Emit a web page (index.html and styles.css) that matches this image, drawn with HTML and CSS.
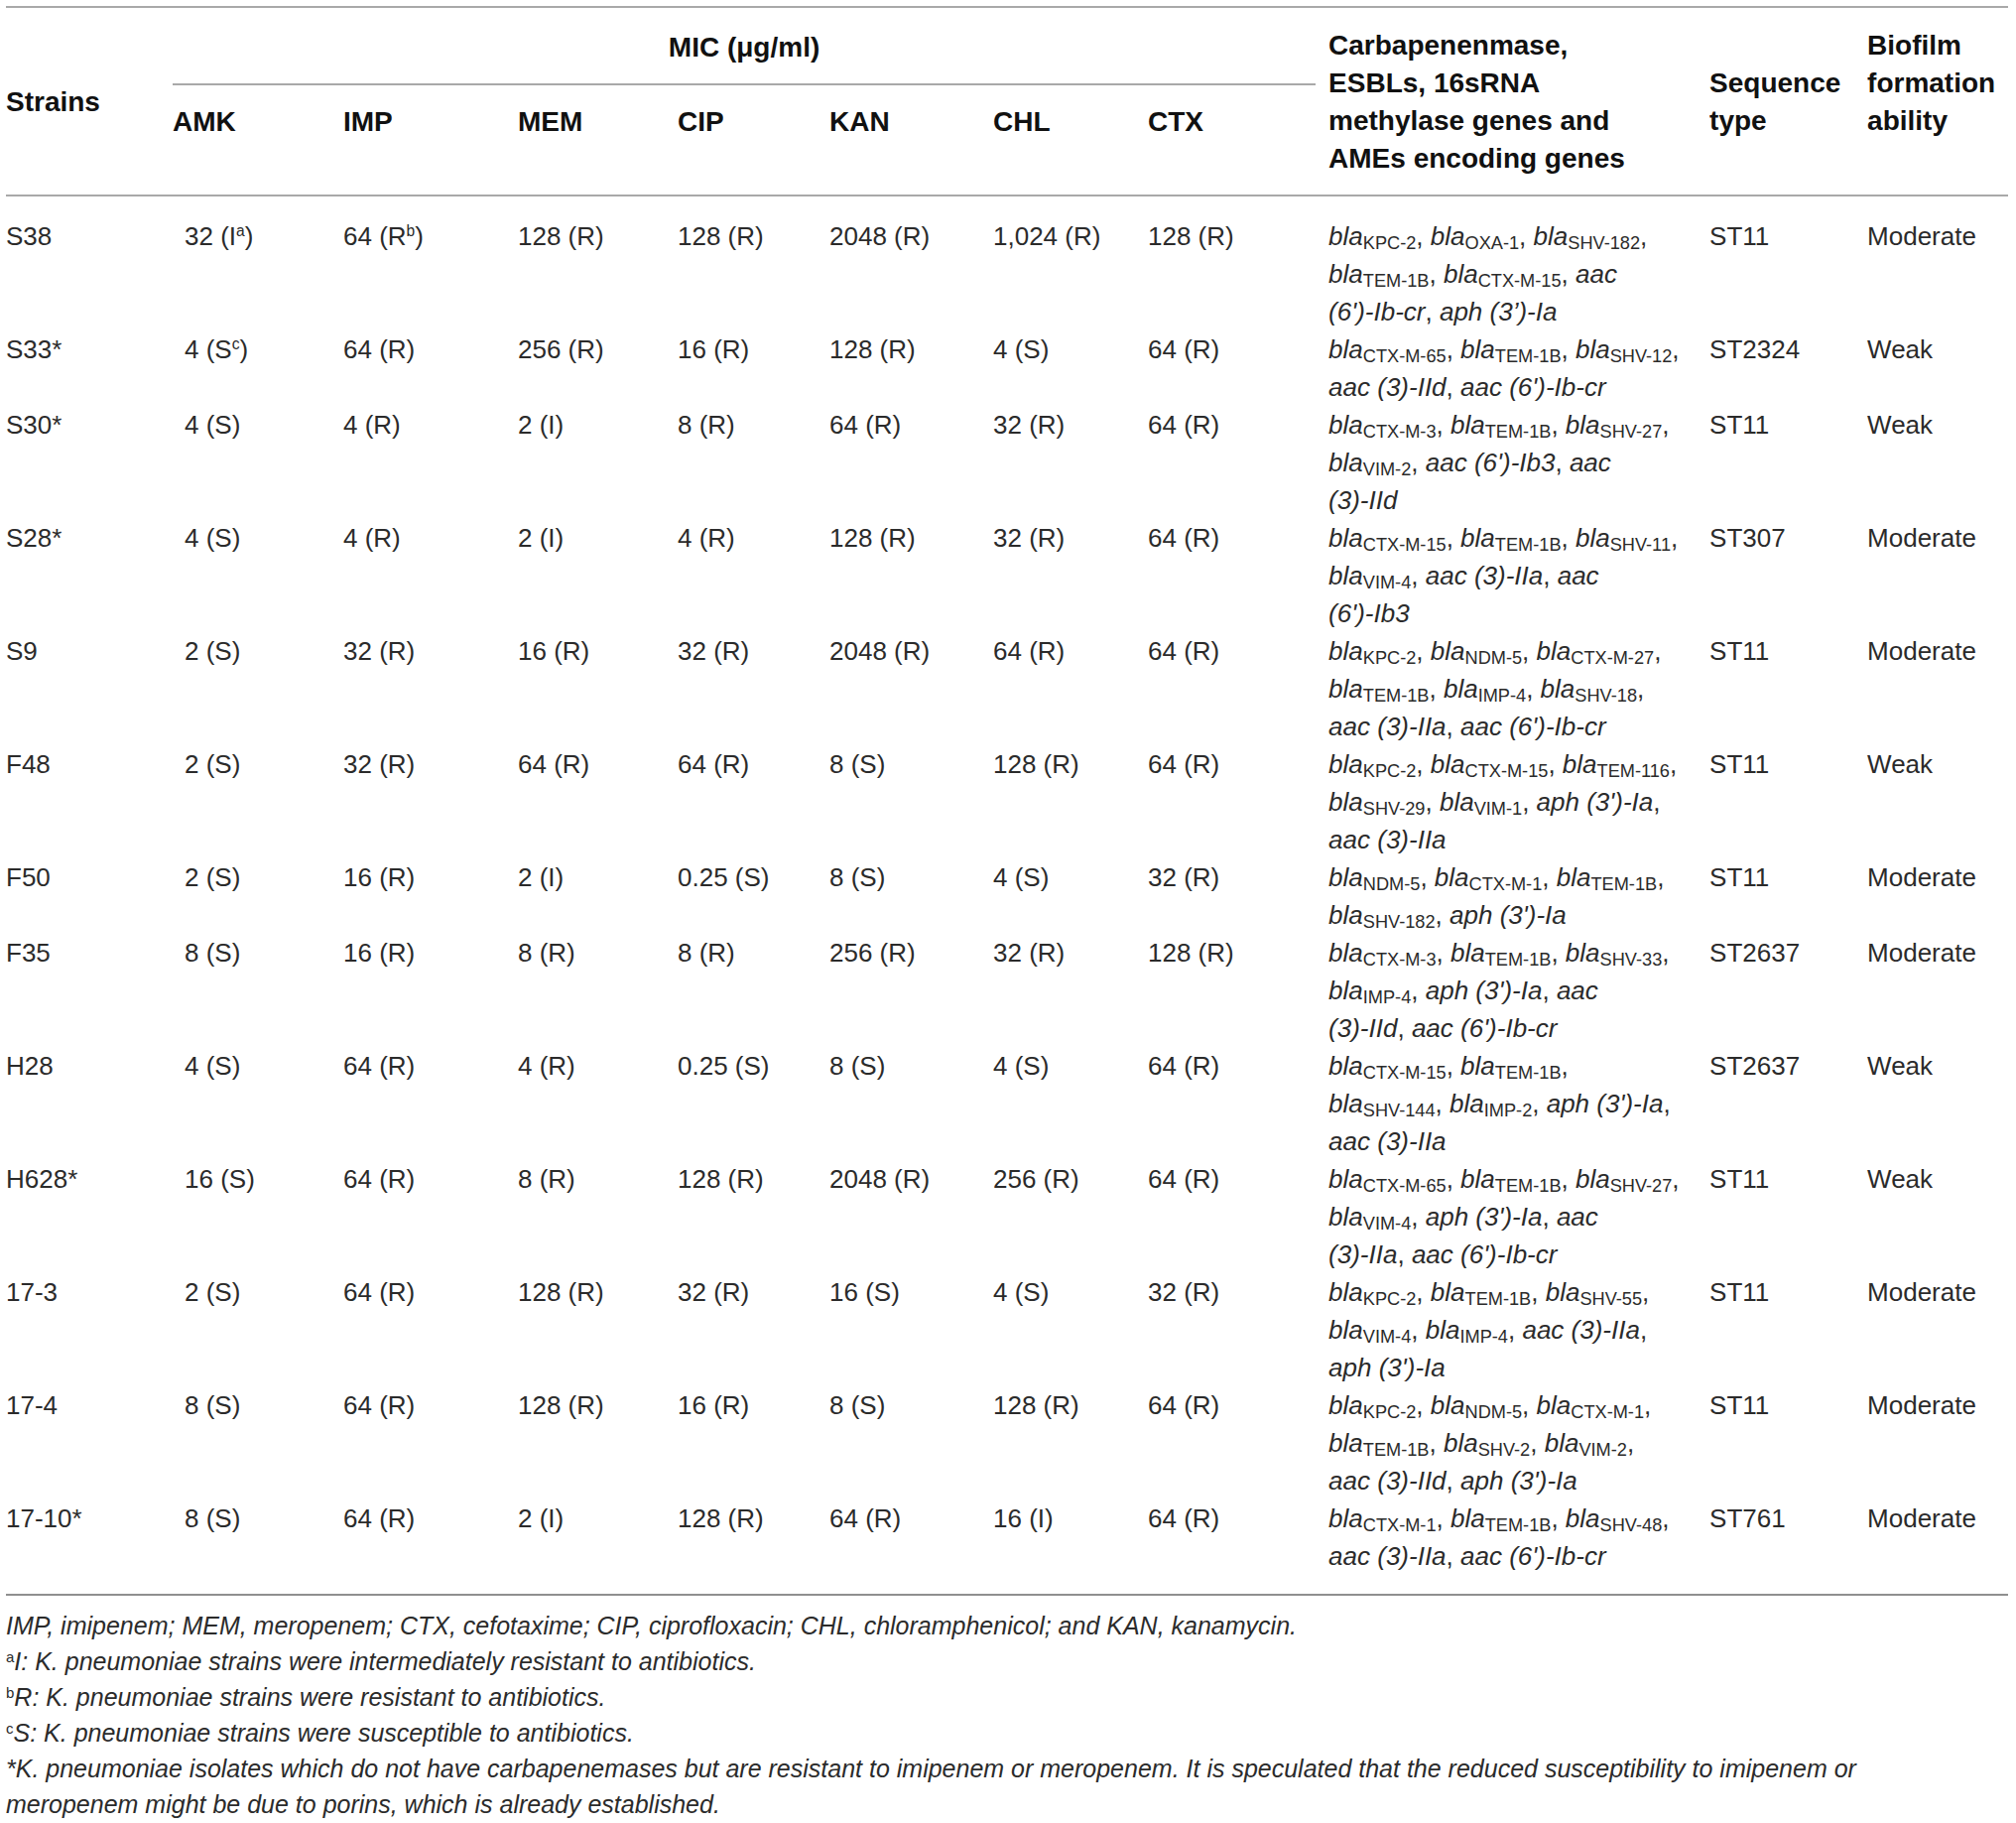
FILE: index.html
```html
<!DOCTYPE html>
<html lang="en">
<head>
<meta charset="utf-8">
<title>Table</title>
<link rel="stylesheet" href="styles.css">
</head>
<body>
<div class="page">
<table class="tbl">
  <colgroup>
    <col class="w-strain"><col class="w-amk"><col class="w-imp"><col class="w-mem"><col class="w-cip"><col class="w-kan"><col class="w-chl"><col class="w-ctx"><col class="w-genes"><col class="w-seq"><col class="w-bio">
  </colgroup>
  <thead>
    <tr class="h1">
      <th rowspan="2" class="span">Strains</th>
      <th colspan="7" class="mic"><div class="mic-label">MIC (μg/ml)</div></th>
      <th rowspan="2" class="span genes-h">Carbapenenmase,<br>ESBLs, 16sRNA<br>methylase genes and<br>AMEs encoding genes</th>
      <th rowspan="2" class="span">Sequence<br>type</th>
      <th rowspan="2" class="span top">Biofilm<br>formation<br>ability</th>
    </tr>
    <tr class="h2">
      <th>AMK</th><th>IMP</th><th>MEM</th><th>CIP</th><th>KAN</th><th>CHL</th><th>CTX</th>
    </tr>
  </thead>
  <tbody>
    <tr>
      <td>S38</td><td class="amk">32 (I<sup>a</sup>)</td><td>64 (R<sup>b</sup>)</td><td>128 (R)</td><td>128 (R)</td><td>2048 (R)</td><td>1,024 (R)</td><td>128 (R)</td>
      <td class="genes"><i>bla</i><sub>KPC-2</sub>, <i>bla</i><sub>OXA-1</sub>, <i>bla</i><sub>SHV-182</sub>,<br><i>bla</i><sub>TEM-1B</sub>, <i>bla</i><sub>CTX-M-15</sub>, <i>aac</i><br><i>(6')-Ib-cr</i>, <i>aph (3’)-Ia</i></td>
      <td>ST11</td><td>Moderate</td>
    </tr>
    <tr>
      <td>S33*</td><td class="amk">4 (S<sup>c</sup>)</td><td>64 (R)</td><td>256 (R)</td><td>16 (R)</td><td>128 (R)</td><td>4 (S)</td><td>64 (R)</td>
      <td class="genes"><i>bla</i><sub>CTX-M-65</sub>, <i>bla</i><sub>TEM-1B</sub>, <i>bla</i><sub>SHV-12</sub>,<br><i>aac (3)-IId</i>, <i>aac (6')-Ib-cr</i></td>
      <td>ST2324</td><td>Weak</td>
    </tr>
    <tr>
      <td>S30*</td><td class="amk">4 (S)</td><td>4 (R)</td><td>2 (I)</td><td>8 (R)</td><td>64 (R)</td><td>32 (R)</td><td>64 (R)</td>
      <td class="genes"><i>bla</i><sub>CTX-M-3</sub>, <i>bla</i><sub>TEM-1B</sub>, <i>bla</i><sub>SHV-27</sub>,<br><i>bla</i><sub>VIM-2</sub>, <i>aac (6')-Ib3</i>, <i>aac</i><br><i>(3)-IId</i></td>
      <td>ST11</td><td>Weak</td>
    </tr>
    <tr>
      <td>S28*</td><td class="amk">4 (S)</td><td>4 (R)</td><td>2 (I)</td><td>4 (R)</td><td>128 (R)</td><td>32 (R)</td><td>64 (R)</td>
      <td class="genes"><i>bla</i><sub>CTX-M-15</sub>, <i>bla</i><sub>TEM-1B</sub>, <i>bla</i><sub>SHV-11</sub>,<br><i>bla</i><sub>VIM-4</sub>, <i>aac (3)-IIa</i>, <i>aac</i><br><i>(6')-Ib3</i></td>
      <td>ST307</td><td>Moderate</td>
    </tr>
    <tr>
      <td>S9</td><td class="amk">2 (S)</td><td>32 (R)</td><td>16 (R)</td><td>32 (R)</td><td>2048 (R)</td><td>64 (R)</td><td>64 (R)</td>
      <td class="genes"><i>bla</i><sub>KPC-2</sub>, <i>bla</i><sub>NDM-5</sub>, <i>bla</i><sub>CTX-M-27</sub>,<br><i>bla</i><sub>TEM-1B</sub>, <i>bla</i><sub>IMP-4</sub>, <i>bla</i><sub>SHV-18</sub>,<br><i>aac (3)-IIa</i>, <i>aac (6')-Ib-cr</i></td>
      <td>ST11</td><td>Moderate</td>
    </tr>
    <tr>
      <td>F48</td><td class="amk">2 (S)</td><td>32 (R)</td><td>64 (R)</td><td>64 (R)</td><td>8 (S)</td><td>128 (R)</td><td>64 (R)</td>
      <td class="genes"><i>bla</i><sub>KPC-2</sub>, <i>bla</i><sub>CTX-M-15</sub>, <i>bla</i><sub>TEM-116</sub>,<br><i>bla</i><sub>SHV-29</sub>, <i>bla</i><sub>VIM-1</sub>, <i>aph (3')-Ia</i>,<br><i>aac (3)-IIa</i></td>
      <td>ST11</td><td>Weak</td>
    </tr>
    <tr>
      <td>F50</td><td class="amk">2 (S)</td><td>16 (R)</td><td>2 (I)</td><td>0.25 (S)</td><td>8 (S)</td><td>4 (S)</td><td>32 (R)</td>
      <td class="genes"><i>bla</i><sub>NDM-5</sub>, <i>bla</i><sub>CTX-M-1</sub>, <i>bla</i><sub>TEM-1B</sub>,<br><i>bla</i><sub>SHV-182</sub>, <i>aph (3')-Ia</i></td>
      <td>ST11</td><td>Moderate</td>
    </tr>
    <tr>
      <td>F35</td><td class="amk">8 (S)</td><td>16 (R)</td><td>8 (R)</td><td>8 (R)</td><td>256 (R)</td><td>32 (R)</td><td>128 (R)</td>
      <td class="genes"><i>bla</i><sub>CTX-M-3</sub>, <i>bla</i><sub>TEM-1B</sub>, <i>bla</i><sub>SHV-33</sub>,<br><i>bla</i><sub>IMP-4</sub>, <i>aph (3')-Ia</i>, <i>aac</i><br><i>(3)-IId</i>, <i>aac (6')-Ib-cr</i></td>
      <td>ST2637</td><td>Moderate</td>
    </tr>
    <tr>
      <td>H28</td><td class="amk">4 (S)</td><td>64 (R)</td><td>4 (R)</td><td>0.25 (S)</td><td>8 (S)</td><td>4 (S)</td><td>64 (R)</td>
      <td class="genes"><i>bla</i><sub>CTX-M-15</sub>, <i>bla</i><sub>TEM-1B</sub>,<br><i>bla</i><sub>SHV-144</sub>, <i>bla</i><sub>IMP-2</sub>, <i>aph (3')-Ia</i>,<br><i>aac (3)-IIa</i></td>
      <td>ST2637</td><td>Weak</td>
    </tr>
    <tr>
      <td>H628*</td><td class="amk">16 (S)</td><td>64 (R)</td><td>8 (R)</td><td>128 (R)</td><td>2048 (R)</td><td>256 (R)</td><td>64 (R)</td>
      <td class="genes"><i>bla</i><sub>CTX-M-65</sub>, <i>bla</i><sub>TEM-1B</sub>, <i>bla</i><sub>SHV-27</sub>,<br><i>bla</i><sub>VIM-4</sub>, <i>aph (3')-Ia</i>, <i>aac</i><br><i>(3)-IIa</i>, <i>aac (6')-Ib-cr</i></td>
      <td>ST11</td><td>Weak</td>
    </tr>
    <tr>
      <td>17-3</td><td class="amk">2 (S)</td><td>64 (R)</td><td>128 (R)</td><td>32 (R)</td><td>16 (S)</td><td>4 (S)</td><td>32 (R)</td>
      <td class="genes"><i>bla</i><sub>KPC-2</sub>, <i>bla</i><sub>TEM-1B</sub>, <i>bla</i><sub>SHV-55</sub>,<br><i>bla</i><sub>VIM-4</sub>, <i>bla</i><sub>IMP-4</sub>, <i>aac (3)-IIa</i>,<br><i>aph (3')-Ia</i></td>
      <td>ST11</td><td>Moderate</td>
    </tr>
    <tr>
      <td>17-4</td><td class="amk">8 (S)</td><td>64 (R)</td><td>128 (R)</td><td>16 (R)</td><td>8 (S)</td><td>128 (R)</td><td>64 (R)</td>
      <td class="genes"><i>bla</i><sub>KPC-2</sub>, <i>bla</i><sub>NDM-5</sub>, <i>bla</i><sub>CTX-M-1</sub>,<br><i>bla</i><sub>TEM-1B</sub>, <i>bla</i><sub>SHV-2</sub>, <i>bla</i><sub>VIM-2</sub>,<br><i>aac (3)-IId</i>, <i>aph (3')-Ia</i></td>
      <td>ST11</td><td>Moderate</td>
    </tr>
    <tr>
      <td>17-10*</td><td class="amk">8 (S)</td><td>64 (R)</td><td>2 (I)</td><td>128 (R)</td><td>64 (R)</td><td>16 (I)</td><td>64 (R)</td>
      <td class="genes"><i>bla</i><sub>CTX-M-1</sub>, <i>bla</i><sub>TEM-1B</sub>, <i>bla</i><sub>SHV-48</sub>,<br><i>aac (3)-IIa</i>, <i>aac (6')-Ib-cr</i></td>
      <td>ST761</td><td>Moderate</td>
    </tr>
  </tbody>
</table>
<div class="notes">
  <p>IMP, imipenem; MEM, meropenem; CTX, cefotaxime; CIP, ciprofloxacin; CHL, chloramphenicol; and KAN, kanamycin.</p>
  <p><sup>a</sup>I: K. pneumoniae strains were intermediately resistant to antibiotics.</p>
  <p><sup>b</sup>R: K. pneumoniae strains were resistant to antibiotics.</p>
  <p><sup>c</sup>S: K. pneumoniae strains were susceptible to antibiotics.</p>
  <p>*K. pneumoniae isolates which do not have carbapenemases but are resistant to imipenem or meropenem. It is speculated that the reduced susceptibility to imipenem or meropenem might be due to porins, which is already established.</p>
</div>
</div>
</body>
</html>
```

FILE: styles.css
```css
html, body {
  margin: 0;
  padding: 0;
  background: #ffffff;
}

.page {
  padding: 6px 8px 0 6px;
  font-family: "Liberation Sans", Arial, sans-serif;
  color: #1e1e1e;
}

.tbl {
  width: 2018px;
  table-layout: fixed;
  border-collapse: separate;
  border-spacing: 0;
  border-top: 2px solid #a9a9a9;
  font-size: 26px;
  line-height: 38px;
}

.w-strain { width: 168px; }
.w-amk { width: 172px; }
.w-imp { width: 176px; }
.w-mem { width: 161px; }
.w-cip { width: 153px; }
.w-kan { width: 165px; }
.w-chl { width: 156px; }
.w-ctx { width: 182px; }
.w-genes { width: 384px; }
.w-seq { width: 159px; }
.w-bio { width: 142px; }

.tbl th {
  font-size: 28px;
  font-weight: bold;
  text-align: left;
  padding: 0;
  white-space: nowrap;
  color: #111;
}

.tbl th.span {
  vertical-align: middle;
  padding: 19px 0 17px 0;
  border-bottom: 2px solid #a9a9a9;
}

.tbl th.top {
  vertical-align: top;
}

.tbl th.mic {
  vertical-align: top;
  padding: 21px 0 0 0;
}

.mic-label {
  margin-right: 13px;
  padding-bottom: 17px;
  border-bottom: 2px solid #a9a9a9;
  text-align: center;
}

.h2 th {
  vertical-align: top;
  padding: 18px 0 54px 0;
  border-bottom: 2px solid #a9a9a9;
}

.tbl td {
  padding: 0;
  vertical-align: top;
  white-space: nowrap;
  font-weight: normal;
  color: #2b2b2b;
}

.tbl td.amk {
  padding-left: 12px;
}

.tbl tbody tr:first-child td {
  padding-top: 21px;
}

.tbl tbody tr:last-child td {
  padding-bottom: 19px;
  border-bottom: 2px solid #8f8f8f;
}

.tbl sup {
  font-size: 0.6em;
  line-height: 0;
  vertical-align: 0.55em;
}

.genes i {
  font-style: italic;
}

.genes sub {
  font-size: 0.7em;
  line-height: 0;
  vertical-align: -0.22em;
}

.notes {
  margin-top: 12px;
  width: 1920px;
  font-size: 25px;
  line-height: 36px;
  font-style: italic;
  color: #2b2b2b;
}

.notes p {
  margin: 0;
}

.notes sup {
  font-size: 0.6em;
  line-height: 0;
  vertical-align: 0.55em;
  font-style: normal;
}
```
